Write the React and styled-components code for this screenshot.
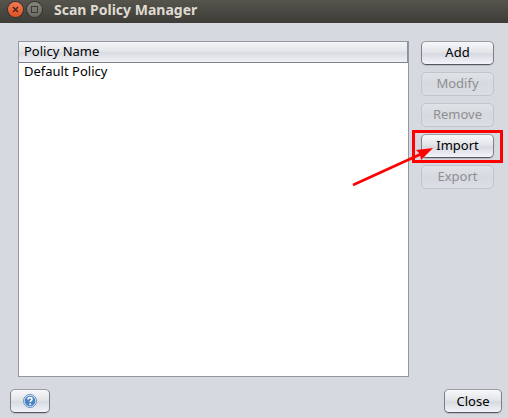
import React from "react";
import styled, { createGlobalStyle } from "styled-components";

const GlobalStyle = createGlobalStyle`
  * { box-sizing: border-box; }
  body {
    margin: 0;
    background: #d6d9df;
    color: #000;
    font: 13px/18px "Noto Sans", "Open Sans", sans-serif;
  }
`;

const Dialog = styled.div`
  display: flex;
  flex-direction: column;
  height: 100vh;
  overflow: hidden;
`;

const TitleBar = styled.header`
  display: flex;
  align-items: center;
  flex: none;
  height: 23px;
  padding: 0 8px 4px;
  gap: 4px;
  background: linear-gradient(#56544d, #3d3c37);
`;

const Title = styled.h1`
  margin: 0 0 0 8px;
  color: #dfdbd2;
  font: bold 14px/18px "Noto Sans", "Open Sans", sans-serif;
`;

const WindowButton = styled.button`
  display: block;
  width: 15px;
  height: 15px;
  padding: 0;
  border: 0;
  border-radius: 50%;
  background: ${(p) => (p.$close ? "linear-gradient(#f47b55, #e2501f)" : "linear-gradient(#85837b, #6b6a63)")};
  box-shadow: 0 0 0 1px #34332e;
  svg { display: block; }
`;

const Content = styled.main`
  display: flex;
  flex: 1;
  min-height: 0;
  gap: 12px;
  padding: 18px 14px 0 18px;
`;

const ListPane = styled.section`
  flex: 1;
  border: 1px solid #9297a1;
  background: #fff;
`;

const PolicyTable = styled.table`
  width: 100%;
  border-collapse: separate;
  border-spacing: 0;
`;

const HeaderCell = styled.th`
  height: 21px;
  padding: 0 5px 2px;
  border-right: 1px solid #8c919b;
  border-bottom: 1px solid #7b808a;
  background: linear-gradient(#f4f5f7, #e2e4e8 48%, #d8dbe1 52%, #eff1f5);
  font-weight: 400;
  text-align: left;
`;

const Cell = styled.td`
  padding: 0 5px;
  line-height: 16px;
`;

const Actions = styled.div`
  display: flex;
  flex-direction: column;
  gap: 7px;
  width: 73px;
`;

const Button = styled.button`
  display: flex;
  align-items: center;
  justify-content: center;
  width: ${(p) => p.$width || "100%"};
  height: 24px;
  padding: ${(p) => (p.$width ? "0" : "0 0 2px")};
  border: 1px solid;
  border-color: #9a9da3 #7d8086 #54575c;
  border-radius: 5px;
  background: linear-gradient(#f7f8fa, #e3e5e9 45%, #d7dae0 55%, #f3f5fb);
  box-shadow: 0 1px 1px #b9bdc5;
  color: #000;
  font: inherit;

  &:disabled {
    border-color: #c1c4ca;
    background: linear-gradient(#dfe2e6, #d6d9df 50%, #dbdee4);
    box-shadow: none;
    color: #8e8f91;
  }
`;

const Highlighted = styled.div`
  position: relative;
`;

const HighlightBox = styled.div`
  position: absolute;
  inset: -4px -9px -5px;
  border: 3px solid #f00;
  pointer-events: none;
`;

const Arrow = styled.svg`
  position: absolute;
  top: 12px;
  left: -70px;
  pointer-events: none;
`;

const Footer = styled.footer`
  display: flex;
  justify-content: space-between;
  flex: none;
  padding: 12px 6px 5px 10px;
`;

const actions = [
  { name: "Add" },
  { name: "Modify", disabled: true },
  { name: "Remove", disabled: true },
  { name: "Import", highlighted: true },
  { name: "Export", disabled: true },
];

function ActionButton({ name, disabled, highlighted }) {
  const button = <Button type="button" disabled={disabled}>{name}</Button>;
  if (!highlighted) return button;
  return (
    <Highlighted>
      {button}
      <HighlightBox />
      <Arrow width="84" height="42" aria-hidden="true">
        <path d="M2 39L70 8" stroke="#f00" strokeWidth="2.5" />
        <path d="M82 2L65 4L69 8L70 14Z" fill="#f00" />
      </Arrow>
    </Highlighted>
  );
}

function HelpIcon() {
  return (
    <svg width="14" height="14" viewBox="0 0 14 14" aria-hidden="true">
      <circle cx="7" cy="7" r="6.5" fill="#dce8f5" stroke="#6590c4" />
      <circle cx="7" cy="7" r="5.3" fill="#4c83c3" />
      <path d="M5 5.5C5 3 9 3 9 5.3C9 6.7 7.2 6.5 7.2 8.1" fill="none" stroke="#fff" strokeWidth="1.6" />
      <circle cx="7.2" cy="10.2" r="1" fill="#fff" />
    </svg>
  );
}

export default function App() {
  return (
    <Dialog>
      <GlobalStyle />
      <TitleBar>
        <WindowButton $close type="button" aria-label="Close window">
          <svg width="15" height="15"><path d="M5 5L10 10M10 5L5 10" stroke="#45281e" strokeWidth="1.5" /></svg>
        </WindowButton>
        <WindowButton type="button" aria-label="Maximize">
          <svg width="15" height="15"><rect x="4.5" y="4.5" width="6" height="6" fill="none" stroke="#3b3a35" /></svg>
        </WindowButton>
        <Title>Scan Policy Manager</Title>
      </TitleBar>
      <Content>
        <ListPane>
          <PolicyTable>
            <thead><tr><HeaderCell scope="col">Policy Name</HeaderCell></tr></thead>
            <tbody><tr><Cell>Default Policy</Cell></tr></tbody>
          </PolicyTable>
        </ListPane>
        <Actions>
          {actions.map((action) => <ActionButton key={action.name} {...action} />)}
        </Actions>
      </Content>
      <Footer>
        <Button type="button" $width="40px" aria-label="Help"><HelpIcon /></Button>
        <Button type="button" $width="58px">Close</Button>
      </Footer>
    </Dialog>
  );
}
